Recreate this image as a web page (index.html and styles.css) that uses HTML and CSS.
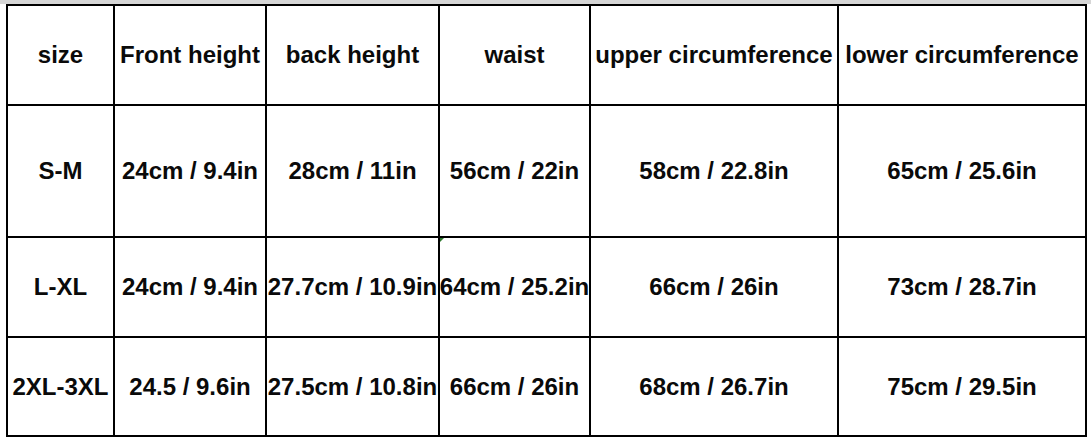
FILE: index.html
```html
<!DOCTYPE html>
<html lang="en">
<head>
<meta charset="utf-8">
<title>Size chart</title>
<link rel="stylesheet" href="styles.css">
</head>
<body>
<div class="strip"></div>
<div class="chart">
  <div class="cell">size</div>
  <div class="cell">Front height</div>
  <div class="cell">back height</div>
  <div class="cell">waist</div>
  <div class="cell">upper circumference</div>
  <div class="cell">lower circumference</div>

  <div class="cell">S-M</div>
  <div class="cell">24cm / 9.4in</div>
  <div class="cell">28cm / 11in</div>
  <div class="cell">56cm / 22in</div>
  <div class="cell">58cm / 22.8in</div>
  <div class="cell">65cm / 25.6in</div>

  <div class="cell">L-XL</div>
  <div class="cell">24cm / 9.4in</div>
  <div class="cell">27.7cm / 10.9in</div>
  <div class="cell flagged">64cm / 25.2in</div>
  <div class="cell">66cm / 26in</div>
  <div class="cell">73cm / 28.7in</div>

  <div class="cell">2XL-3XL</div>
  <div class="cell">24.5 / 9.6in</div>
  <div class="cell">27.5cm / 10.8in</div>
  <div class="cell">66cm / 26in</div>
  <div class="cell">68cm / 26.7in</div>
  <div class="cell">75cm / 29.5in</div>
</div>
</body>
</html>
```

FILE: styles.css
```css
html, body {
  margin: 0;
  padding: 0;
  background: #fff;
}

body {
  width: 1091px;
  height: 443px;
  overflow: hidden;
  font-family: "Liberation Sans", Arial, sans-serif;
  font-weight: bold;
  font-size: 24px;
  color: #0a0a0a;
}

.strip {
  height: 4px;
  background: #d6d6d6;
}

.chart {
  margin-left: 6px;
  width: max-content;
  display: grid;
  grid-template-columns: 105px 150px 171px 149px 246px 246px;
  grid-template-rows: 98px 130px 98px 97px;
  gap: 2px;
  padding: 2px;
  background: #000;
}

.cell {
  background: #fff;
  display: flex;
  align-items: center;
  justify-content: center;
  white-space: nowrap;
  position: relative;
}

.flagged::before {
  content: "";
  position: absolute;
  left: 0;
  top: 0;
  width: 0;
  height: 0;
  border-top: 4px solid #2f7a2f;
  border-right: 4px solid transparent;
}
```
